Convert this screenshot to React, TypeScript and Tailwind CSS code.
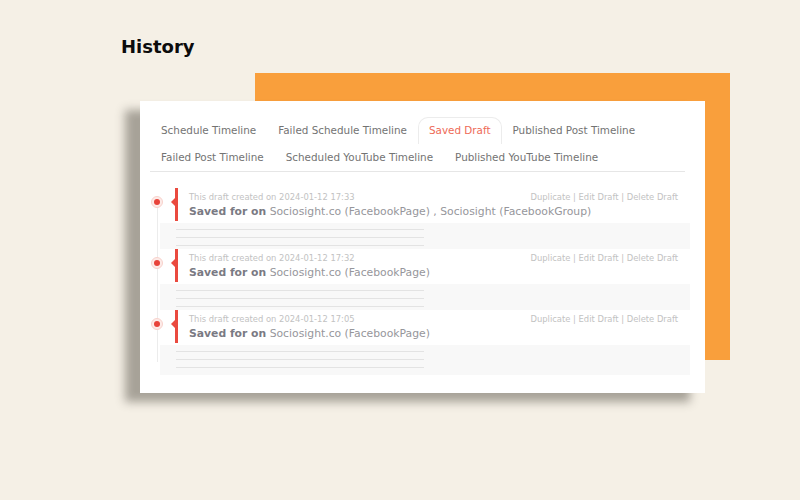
const tabRows = [
  ['Schedule Timeline', 'Failed Schedule Timeline', 'Saved Draft', 'Published Post Timeline'],
  ['Failed Post Timeline', 'Scheduled YouTube Timeline', 'Published YouTube Timeline'],
];

const drafts = [
  { created: '2024-01-12 17:33', pages: 'Sociosight.co (FacebookPage) , Sociosight (FacebookGroup)', block: 'h-[26px]' },
  { created: '2024-01-12 17:32', pages: 'Sociosight.co (FacebookPage)', block: 'h-[26px]' },
  { created: '2024-01-12 17:05', pages: 'Sociosight.co (FacebookPage)', block: 'h-[30px]' },
];

function Tab({ label, active }: { label: string; active: boolean }) {
  return (
    <div
      className={`flex h-[27px] items-center px-[10px] text-[10.4px] ${
        active ? 'rounded-t-[10px] border border-b-0 border-[#ececec] text-[#ee6a57]' : 'border border-transparent text-[#737373]'
      }`}
    >
      {label}
    </div>
  );
}

function DraftItem({ created, pages, block }: { created: string; pages: string; block: string }) {
  return (
    <div className="relative">
      <div className="absolute left-[-9px] top-[8px] flex h-[12px] w-[12px] items-center justify-center rounded-full border border-[#f8d2cc] bg-[#fdebe8]">
        <div className="h-[6px] w-[6px] rounded-full bg-[#e8433a]" />
      </div>
      <div className="relative ml-[15px] h-[33px] border-l-[3px] border-[#ea4a3f] pl-[11px] pr-[12px] pt-[3px]">
        <div className="absolute left-[-7px] top-[10px] h-0 w-0 border-y-[4px] border-r-[4px] border-y-transparent border-r-[#ea4a3f]" />
        <div className="flex items-center justify-between text-[8.4px] leading-[12px] text-[#c2c2c2]">
          <span>This draft created on {created}</span>
          <span>Duplicate | Edit Draft | Delete Draft</span>
        </div>
        <p className="mt-[2px] text-[10.8px] leading-[14px] text-[#96969b]">
          <span className="font-bold text-[#7a7a83]">Saved for on</span> {pages}
        </p>
      </div>
      <div className={`mt-[2px] bg-[#f8f8f8] pt-[6px] ${block}`}>
        <div className="ml-[16px] flex w-[248px] flex-col gap-[7px]">
          <div className="h-px bg-[#e3e3e3]" />
          <div className="h-px bg-[#e3e3e3]" />
          <div className="h-px bg-[#e3e3e3]" />
        </div>
      </div>
    </div>
  );
}

export default function App() {
  return (
    <div className="h-[500px] w-[800px] overflow-hidden bg-[#f5f0e6] font-['DejaVu_Sans',sans-serif]">
      <h1 className="pl-[121px] pt-[35px] text-[18px] font-bold leading-[24px] text-[#0c0c0c]">History</h1>

      <div className="relative ml-[140px] mt-[42px] w-[565px]">
        <div className="absolute left-[115px] top-[-28px] h-[287px] w-[475px] bg-[#f99f3c]" />

        <div className="relative h-[292px] bg-white pt-[16px] shadow-[-15px_9px_9px_rgba(60,55,45,0.42)]">
          <div className="ml-[10px] mr-[20px] border-b border-[#e6e6e6]">
            {tabRows.map((row, i) => (
              <div key={i} className="flex">
                {row.map((t) => (
                  <Tab key={t} label={t} active={t === 'Saved Draft'} />
                ))}
              </div>
            ))}
          </div>

          <div className="relative ml-[20px] mr-[15px] mt-[16px]">
            <div className="absolute left-[-3px] top-[14px] h-[160px] w-px bg-[#ececec]" />
            {drafts.map((d) => (
              <DraftItem key={d.created} {...d} />
            ))}
          </div>
        </div>
      </div>
    </div>
  );
}
